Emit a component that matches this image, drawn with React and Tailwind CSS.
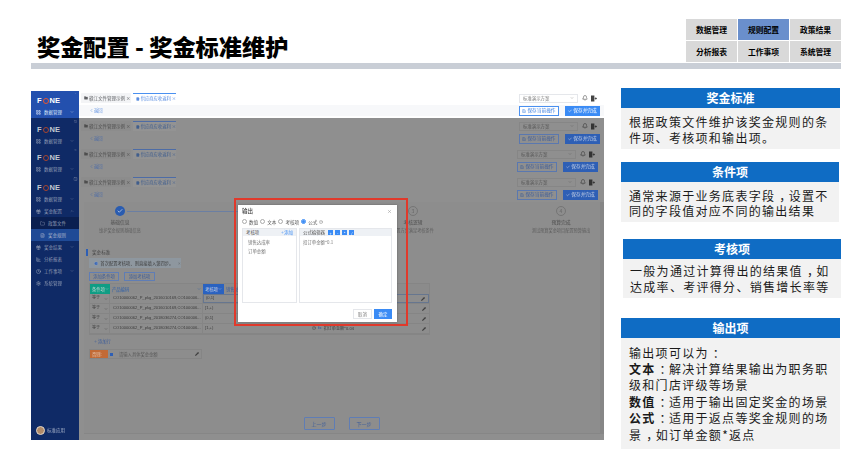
import React from "react";
import { Bell, Pencil, Check, Info, Plus, ChevronDown, ChevronUp, ChevronLeft, Settings, X, Save, CircleHelp, Folder, FileText, LayoutGrid, Gift, ChartBar, Clock, PanelRight } from "lucide-react";

function Logo({ dim }) {
  return (
    <div className={`flex items-center pl-[6px] text-[7.5px] leading-[9px] font-bold font-['Liberation_Sans',sans-serif] ${dim ? "text-[#c4c8d0]" : "text-white"}`}>
      <span>F</span>
      <span className={`mx-[1px] w-[6px] h-[6px] rounded-full border-[1.5px] ${dim ? "border-[#a8452f]" : "border-[#e8562f]"}`}></span>
      <span>NE</span>
    </div>
  );
}

function SideTop({ dim, h }) {
  return (
    <div className={`flex flex-col ${h} ${dim ? "" : "bg-[#2350ae]"}`}>
      <PanelRight size={5} className={`self-end mr-[1px] mt-[2px] ${dim ? "text-[#7d8aa8]" : "text-[#b9c8e8]"}`} />
      <div className="mt-[2px]"><Logo dim={dim} /></div>
      <SideItem label="数据管理" icon={LayoutGrid} dim={dim} arrow mt="mt-[1px]" />
    </div>
  );
}

function SideItem({ label, icon: Icon, dim, arrow, up, mt = "" }) {
  const Arrow = up ? ChevronUp : ChevronDown;
  return (
    <div className={`flex items-center shrink-0 h-[12px] pl-[5px] pr-[5px] gap-[3px] text-[4.5px] ${dim ? "text-[#8f9ab3]" : "text-[#dbe4f7]"} ${mt}`}>
      <Icon size={5} strokeWidth={2.5} />
      <span className="flex-1 whitespace-nowrap">{label}</span>
      {arrow && <Arrow size={4} />}
    </div>
  );
}

function Sidebar() {
  return (
    <div className="w-[48px] shrink-0 bg-[#0f2a66] flex flex-col">
      <SideTop h="h-[27px]" />
      <SideTop dim h="h-[29px]" />
      <SideTop dim h="h-[28px]" />
      <SideTop dim h="h-[30px]" />
      <SideItem label="奖金配置" icon={Gift} dim arrow up />
      <div className="flex items-center h-[12px] pl-[9px] gap-[3px] text-[4.5px] text-[#8f9ab3] bg-[#0a1f50]"><Folder size={5} /><span>政策文件</span></div>
      <div className="flex items-center h-[12px] pl-[9px] gap-[3px] text-[4.5px] text-[#a9b4cb] bg-[#1f4a96]"><FileText size={5} /><span>奖金规则</span></div>
      <SideItem label="奖金结果" icon={Gift} dim arrow />
      <SideItem label="分析报表" icon={ChartBar} dim />
      <SideItem label="工作事项" icon={Clock} dim arrow />
      <SideItem label="系统管理" icon={Settings} dim />
      <div className="mt-auto mb-[5px] ml-[5px] flex items-center gap-[2px] text-[4.5px] text-[#a9b4cb]">
        <span className="w-[9px] h-[9px] rounded-full bg-[#b08a68] border border-[#e2d6c8]"></span>
        <span>标准应用</span>
      </div>
    </div>
  );
}

function ExitIcon({ className }) {
  return (
    <svg viewBox="0 0 8 8" width="6" height="7" className={className} fill="currentColor">
      <rect x="0" y="0" width="4.5" height="8" />
      <rect x="5" y="3.4" width="2" height="1.2" />
      <path d="M6 2 L8 4 L6 6 Z" />
    </svg>
  );
}

function Layer({ dim, pr, h, pad }) {
  const tabText = dim ? "text-[#4f4f4f]" : "text-[#606266]";
  return (
    <div className={`flex flex-col shrink-0 ${h} ${pr} ${pad} ${dim ? "bg-[#8f8f8f]" : "bg-white"}`}>
      <div className="flex items-center h-[12px] pl-[2px]">
        <div className={`flex items-center gap-[1px] h-[10px] w-[50px] pl-[3px] text-[4.5px] rounded-t-[1px] ${dim ? "bg-[#8c8c8c]" : "bg-[#f3f4f6]"} ${tabText}`}>
          <Folder size={4} fill="currentColor" /><span className="whitespace-nowrap">赣江文件管理示例 ×</span>
        </div>
        <div className={`ml-[2px] flex items-center gap-[1px] h-[10px] w-[43px] pl-[3px] text-[4.3px] border-t ${dim ? "bg-[#939393] border-[#4d6ca6] text-[#43608f]" : "bg-white border-[#4a90f0] text-[#5d8fe0]"}`}>
          <FileText size={4} fill="currentColor" /><span className="whitespace-nowrap">供应商应收返利 ×</span>
        </div>
        <div className={`ml-auto w-[59px] h-[9px] flex items-center justify-between px-[3px] text-[4.4px] border ${dim ? "border-[#868686] text-[#555]" : "border-[#e5e7eb] text-[#777]"}`}>
          <span>标准演示方案</span><ChevronDown size={4} />
        </div>
        <Bell size={6} className={`ml-[4px] ${dim ? "text-[#333]" : "text-[#444]"}`} />
        <ExitIcon className={`ml-[3px] mr-[7px] ${dim ? "text-[#333]" : "text-[#444]"}`} />
      </div>
      <div className={`flex items-center flex-1 mt-[1px] pl-[10px] ${dim ? "" : "bg-[#f7f8fa]"}`}>
        <span className={`flex items-center text-[4.3px] ${dim ? "text-[#4a6ba8]" : "text-[#5d8fe0]"}`}><ChevronLeft size={5} />返回</span>
        <div className={`ml-auto w-[40px] h-[10px] flex items-center justify-center gap-[1px] text-[4.7px] border ${dim ? "border-[#5a78b0] text-[#3d5d9a]" : "border-[#4a90f0] text-[#3b7ee0] bg-white"}`}>
          <Save size={4} />保存当前操作
        </div>
        <div className={`ml-[6px] mr-[4px] w-[35px] h-[10px] flex items-center justify-center gap-[1px] text-[4.7px] ${dim ? "bg-[#2e5fb5] text-[#c8d3e6]" : "bg-[#3a8bf5] text-white"}`}>
          <Check size={4} strokeWidth={3} />保存并完成
        </div>
      </div>
    </div>
  );
}

function Step({ n, title, desc, done }) {
  return (
    <div className="flex flex-col items-center w-[50px] shrink-0">
      {done ? (
        <span className="w-[10px] h-[10px] rounded-full bg-[#2a5cb0] flex items-center justify-center text-[#c9d6ea]"><Check size={6} strokeWidth={3} /></span>
      ) : (
        <span className="w-[10px] h-[10px] rounded-full border border-[#757575] flex items-center justify-center text-[5px] text-[#666]">{n}</span>
      )}
      <span className="mt-[1px] text-[4.8px] leading-[9px] text-[#4d4d4d] whitespace-nowrap">{title}</span>
      <span className="text-[4.2px] leading-[9px] text-[#5e5e5e] whitespace-nowrap">{desc}</span>
    </div>
  );
}

const rows = [
  ["CO10000062_P_pkg_2016010169,CO100006...", "(0,1]", true],
  ["CO10000062_P_pkg_2016010169,CO100006...", "[1,+)", false],
  ["CO10000062_P_pkg_2018036274,CO100006...", "(0,1]", false],
  ["CO10000062_P_pkg_2018036274,CO100006...", "[1,+)", false],
];

function TableRows() {
  return rows.map(([code, range, active], i) => (
    <div key={i} className="flex h-[10px] border-b border-[#858585] text-[4.1px] text-[#3d3d3d] items-center font-['Liberation_Sans','Noto_Sans_CJK_SC',sans-serif]">
      <div className="w-[20px] shrink-0 h-full flex items-center justify-between pl-[2px] pr-[1px] border-r border-[#858585]"><span className="whitespace-nowrap">等于</span><ChevronDown size={4} /></div>
      <div className="w-[93px] shrink-0 h-full flex items-center justify-between pl-[3px] pr-[2px] border-r border-[#858585]"><span className="whitespace-nowrap">{code}</span><Pencil size={4} fill="currentColor" /></div>
      <div className={`flex-1 h-full flex items-center pl-[2px] pr-[3px] ${active ? "border border-[#66768f]" : ""}`}>
        <span className="w-[107px] shrink-0">{range}</span>
        {i === 3 && <span className="flex items-center gap-[2px] whitespace-nowrap"><CircleHelp size={4} /><span className="text-[#3d5d9a] font-bold">fx</span><span className="font-['Noto_Sans_CJK_SC',sans-serif]">扣订单金额*0.04</span></span>}
        <Pencil size={4} fill="currentColor" className="ml-auto" />
      </div>
    </div>
  ));
}

function Body() {
  return (
    <div className="flex-1 bg-[#8f8f8f] pl-[5px] pb-[6px] flex flex-col min-h-0">
      <div className="flex-1 bg-[#8d8d8d] border-b border-r-[4px] border-[#868686] flex flex-col">
        <div className="flex items-start pt-[4px] pl-[11px] h-[47px] shrink-0">
          <Step title="基础信息" desc="维护奖金规则基础信息" done />
          <div className="w-[180px] h-[1px] bg-[#6b7fa3] mt-[5px] -ml-[18px]"></div>
          <div className="w-[81px] shrink-0"></div>
          <Step n="3" title="考核逻辑" desc="配置方案满足考核条件" />
          <div className="ml-[98px]"><Step n="4" title="预算完成" desc="测试预算奖金项目配置预算输出" /></div>
        </div>
        <div className="ml-[2px] flex items-center h-[7px] text-[4.6px] text-[#444] border-l-[2px] border-[#2e5fb5] pl-[4px]">奖金标准</div>
        <div className="ml-[5px] mt-[2px] w-[92px] h-[10px] bg-[#8e979f] flex items-center pl-[5px] gap-[2px] text-[4.3px] text-[#3d3d3d]">
          <Info size={5} fill="#2e5fb5" className="text-[#a8b4c8]" /><span className="whitespace-nowrap">首次配置考核项、则直接填入第四步。</span><X size={3} className="ml-[3px]" />
        </div>
        <div className="ml-[5px] mt-[4px] flex gap-[5px]">
          <div className="w-[30px] h-[9px] border border-[#5f7db5] flex items-center justify-center text-[4.3px] text-[#3d5d9a]">添加条件项</div>
          <div className="w-[31px] h-[9px] border border-[#5f7db5] flex items-center justify-center text-[4.3px] text-[#3d5d9a]">添加考核项</div>
        </div>
        <div className="ml-[5px] mt-[2px] w-[341px] border border-[#858585]">
          <div className="flex h-[10px] text-[4.3px] items-center bg-[#8b8b8b]">
            <div className="w-[20px] shrink-0 h-full bg-[#0f9d84] text-[#c3d8d2] flex items-center justify-between pl-[2px] pr-[1px]"><span className="whitespace-nowrap">条件项</span><ChevronDown size={4} /></div>
            <div className="w-[93px] shrink-0 h-full flex items-center justify-between px-[2px] text-[#2e5fa8]"><span>产品编码</span><ChevronDown size={4} /></div>
            <div className="w-[21px] shrink-0 h-full bg-[#2a62c0] text-[#c8d3e6] flex items-center justify-between px-[2px]"><span className="whitespace-nowrap">考核项</span><ChevronDown size={4} /></div>
            <div className="pl-[2px] text-[#3d5d9a]">销售达成率</div>
          </div>
          <TableRows />
        </div>
        <div className="ml-[10px] mt-[3px] h-[6px] flex items-center gap-[1px] text-[4.3px] text-[#3d5d9a]"><Plus size={3} />添加行</div>
        <div className="ml-[5px] mt-[5px] w-[113px] h-[10px] flex items-center border border-[#858585] text-[4.3px]">
          <div className="w-[18px] h-full bg-[#c26a35] text-[#e5c9b6] flex items-center pl-[2px]">否则:</div>
          <span className="ml-[2px] w-[3px] h-[3px] bg-[#2e5fb5]"></span>
          <span className="ml-[6px] text-[#5a5a5a]">请输入具体奖金金额</span>
          <Pencil size={4} fill="currentColor" className="ml-auto mr-[2px] text-[#3d3d3d]" />
        </div>
        <div className="mt-auto mb-[3px] flex justify-center gap-[14px] pr-[1px]">
          <div className="w-[31px] h-[13px] border border-[#5f7db5] rounded-[1px] flex items-center justify-center text-[5px] text-[#3d5d9a]">上一步</div>
          <div className="w-[31px] h-[13px] border border-[#5f7db5] rounded-[1px] flex items-center justify-center text-[5px] text-[#3d5d9a]">下一步</div>
        </div>
      </div>
    </div>
  );
}

function Radio({ label, on, help }) {
  return (
    <span className="flex items-center gap-[2px] text-[4.6px] text-[#555]">
      <span className={`w-[5px] h-[5px] rounded-full border flex items-center justify-center ${on ? "border-[#3a8bf5]" : "border-[#aaa]"}`}>
        {on && <span className="w-[3px] h-[3px] rounded-full bg-[#3a8bf5]"></span>}
      </span>
      {label}
      {help && <CircleHelp size={4} className="text-[#777]" />}
    </span>
  );
}

function Modal() {
  return (
    <div className="absolute left-[203px] top-[107px] w-[174px] h-[128px] border-2 border-[#e0392b]">
      <div className="absolute left-[2px] top-[5px] w-[159px] h-[117px] bg-white flex flex-col pl-[4px] pr-[5px] shadow-[0_0_2px_rgba(0,0,0,0.3)]">
        <div className="flex items-center justify-between h-[11px] pt-[1px] text-[5.5px] font-medium text-[#444]"><span>输出</span><X size={5} className="text-[#888]" /></div>
        <div className="flex items-center gap-[2px] mt-[1px] h-[10px]">
          <Radio label="数值" /><Radio label="文本" /><Radio label="考核项" /><Radio label="公式" on help />
        </div>
        <div className="flex gap-[2px] mt-[1px] h-[75px]">
          <div className="w-[55px] border border-[#e5e7eb] flex flex-col">
            <div className="flex items-center justify-between h-[7px] px-[3px] bg-[#eef1f5] text-[4.4px] text-[#555]"><span>考核项</span><span className="flex items-center text-[#3a8bf5]"><Plus size={3} />添加</span></div>
            <div className="pl-[5px] mt-[2px] text-[4.4px] leading-[9px] text-[#777]"><div>销售达成率</div><div>订单金额</div></div>
          </div>
          <div className="flex-1 border border-[#e5e7eb] flex flex-col">
            <div className="flex items-center h-[7px] px-[3px] bg-[#eef1f5] text-[4.4px] text-[#555] gap-[2.5px]">
              <span className="mr-[1px]">公式编辑器</span>
              {["+", "-", "*", "/"].map((s) => <span key={s} className="w-[4.5px] h-[5px] bg-[#3a8bf5] text-white flex items-center justify-center text-[4px]">{s}</span>)}
            </div>
            <div className="pl-[3px] mt-[2px] text-[4.4px] leading-[9px] text-[#777]">扣订单金额*0.1</div>
          </div>
        </div>
        <div className="flex justify-end gap-[2px] mt-[6px]">
          <div className="w-[19px] h-[10px] border border-[#e5e7eb] flex items-center justify-center text-[4.4px] text-[#777]">取消</div>
          <div className="w-[18px] h-[10px] bg-[#3a8bf5] flex items-center justify-center text-[4.4px] text-white">确定</div>
        </div>
      </div>
    </div>
  );
}

function Panel({ title, wrap, children }) {
  return (
    <div className={wrap}>
      <div className="h-[20px] bg-[#0f6cc4] text-white text-[12px] font-bold flex items-center justify-center">{title}</div>
      <div className="bg-[#f2f2f2] pl-[8px] pr-[3px] text-[12px] tracking-[1.3px] leading-[16.4px] text-[#1a1a1a]">{children}</div>
    </div>
  );
}

function Pn({ c }) {
  return <span className="inline-block translate-x-[4px]">{c}</span>;
}

const nav = ["数据管理", "规则配置", "政策结果", "分析报表", "工作事项", "系统管理"];

export default function App() {
  return (
    <div className="w-[864px] h-[452px] bg-white overflow-hidden font-['Noto_Sans_CJK_SC','Liberation_Sans',sans-serif]">
      <div className="flex items-center justify-between pt-[19px] pl-[37px] pr-[23px]">
        <h1 className="text-[23.2px] leading-[30px] font-black text-black mt-[10px] whitespace-nowrap">奖金配置 - 奖金标准维护</h1>
        <div className="grid grid-cols-3 gap-[1px] w-[155px]">
          {nav.map((n, i) => (
            <div key={n} className={`h-[21px] flex items-center justify-center text-[7.8px] font-bold text-black ${i === 1 ? "bg-[#6a8fcc]" : "bg-[#d9d9d9]"}`}>{n}</div>
          ))}
        </div>
      </div>
      <div className="mx-[31px] mt-[1px] h-[6px] w-[810px] bg-[#c9ced6]"></div>
      <div className="flex items-start mt-[19px] pl-[31px]">
        <div className="relative mt-[3px] w-[573px] h-[349px] flex blur-[0.25px]">
          <Sidebar />
          <div className="flex-1 flex flex-col min-w-0">
            <Layer h="h-[27px]" pr="" pad="pt-[1px] pb-[2px]" />
            <Layer dim h="h-[28px]" pr="" pad="pt-[2px] pb-[2px]" />
            <Layer dim h="h-[28px]" pr="pr-[2px]" pad="pt-[2px] pb-[2px]" />
            <Layer dim h="h-[28px]" pr="pr-[2px]" pad="pt-[2px] pb-[2px]" />
            <Body />
          </div>
          <Modal />
        </div>
        <div className="ml-[17px] flex flex-col">
          <Panel title="奖金标准" wrap="w-[219px]"><div className="pt-[6px] pb-[2px]">根据政策文件维护该奖金规则的条件项、考核项和输出项。</div></Panel>
          <Panel title="条件项" wrap="w-[218px] mt-[13px]"><div className="pt-[6px] pb-[3px] leading-[15.5px]">通常来源于业务底表字段<Pn c="，" />设置不同的字段值对应不同的输出结果</div></Panel>
          <Panel title="考核项" wrap="w-[218px] mt-[17px] ml-[2px]"><div className="pt-[4px] pb-[2px] -ml-[1px]">一般为通过计算得出的结果值<Pn c="，" />如达成率、考评得分、销售增长率等</div></Panel>
          <Panel title="输出项" wrap="w-[219px] mt-[20px]">
            <div className="pt-[7px] pb-[6px]">
              <div>输出项可以为<Pn c="：" /></div>
              <div><b>文本</b><Pn c="：" />解决计算结果输出为职务职级和门店评级等场景</div>
              <div><b>数值</b><Pn c="：" />适用于输出固定奖金的场景</div>
              <div><b>公式</b><Pn c="：" />适用于返点等奖金规则的场景<Pn c="，" />如订单金额*返点</div>
            </div>
          </Panel>
        </div>
      </div>
    </div>
  );
}
